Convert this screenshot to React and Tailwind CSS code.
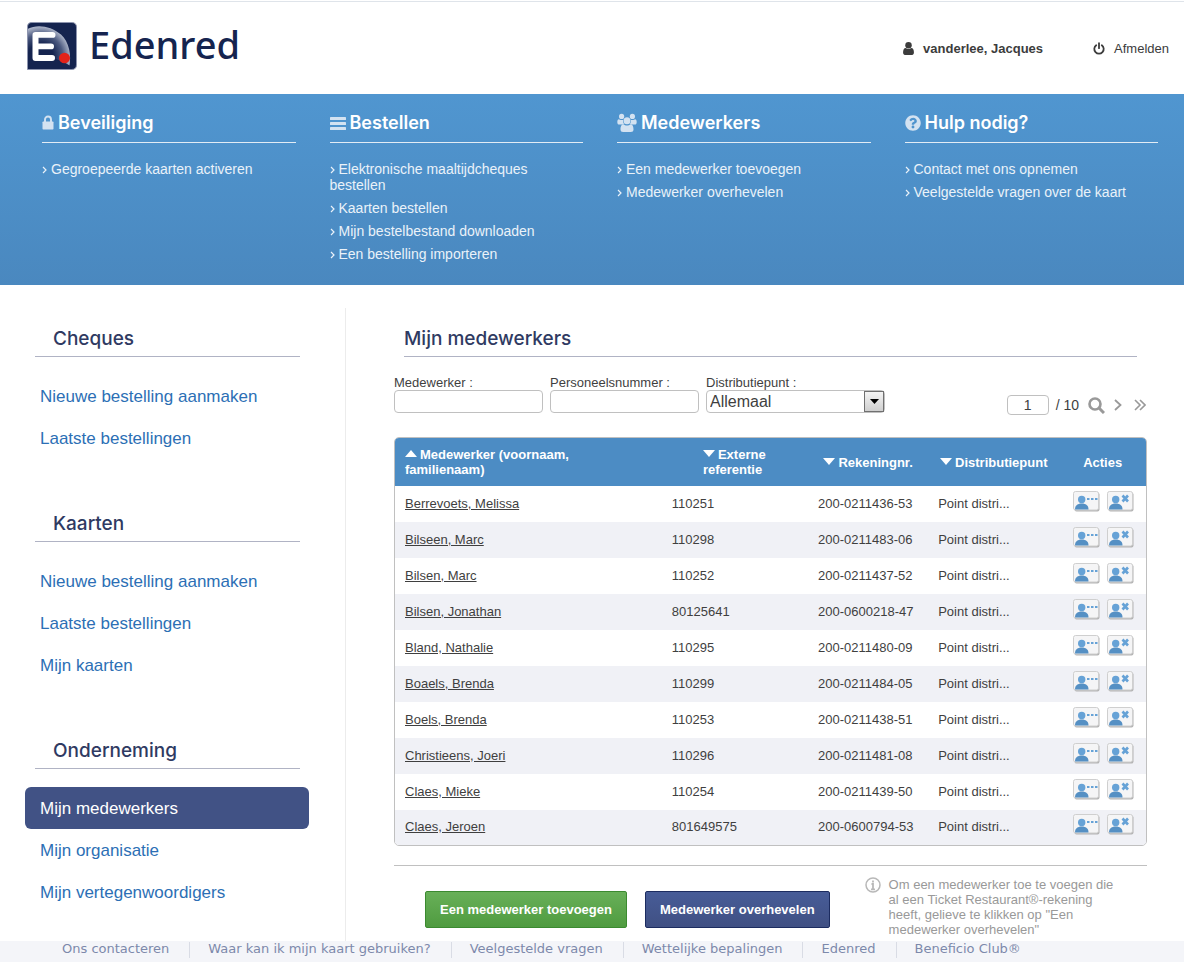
import { FaQuestionCircle } from 'react-icons/fa'

const NAV = [
  {
    title: 'Beveiliging',
    icon: <LockIcon />,
    links: ['Gegroepeerde kaarten activeren'],
  },
  {
    title: 'Bestellen',
    icon: <BarsIcon />,
    links: [
      'Elektronische maaltijdcheques bestellen',
      'Kaarten bestellen',
      'Mijn bestelbestand downloaden',
      'Een bestelling importeren',
    ],
  },
  {
    title: 'Medewerkers',
    icon: <GroupIcon />,
    links: ['Een medewerker toevoegen', 'Medewerker overhevelen'],
  },
  {
    title: 'Hulp nodig?',
    icon: <FaQuestionCircle className="h-4 w-4" />,
    links: ['Contact met ons opnemen', 'Veelgestelde vragen over de kaart'],
  },
]

const SECTIONS = [
  { title: 'Cheques', items: ['Nieuwe bestelling aanmaken', 'Laatste bestellingen'] },
  { title: 'Kaarten', items: ['Nieuwe bestelling aanmaken', 'Laatste bestellingen', 'Mijn kaarten'] },
  { title: 'Onderneming', items: ['Mijn medewerkers', 'Mijn organisatie', 'Mijn vertegenwoordigers'] },
]

const ACTIVE = 'Mijn medewerkers'

const ROWS = [
  ['Berrevoets, Melissa', '110251', '200-0211436-53'],
  ['Bilseen, Marc', '110298', '200-0211483-06'],
  ['Bilsen, Marc', '110252', '200-0211437-52'],
  ['Bilsen, Jonathan', '80125641', '200-0600218-47'],
  ['Bland, Nathalie', '110295', '200-0211480-09'],
  ['Boaels, Brenda', '110299', '200-0211484-05'],
  ['Boels, Brenda', '110253', '200-0211438-51'],
  ['Christieens, Joeri', '110296', '200-0211481-08'],
  ['Claes, Mieke', '110254', '200-0211439-50'],
  ['Claes, Jeroen', '801649575', '200-0600794-53'],
]

const FOOTER = [
  'Ons contacteren',
  'Waar kan ik mijn kaart gebruiken?',
  'Veelgestelde vragen',
  'Wettelijke bepalingen',
  'Edenred',
  'Beneficio Club®',
]

function LockIcon() {
  return (
    <svg viewBox="0 0 12 15" className="h-[15px] w-3">
      <path d="M3 7V4.500a3 3 0 0 1 6 0V7" fill="none" stroke="currentColor" strokeWidth="1.900" />
      <rect x="0.500" y="6.500" width="11" height="8" rx="0.8" fill="currentColor" />
    </svg>
  )
}

function BarsIcon() {
  return (
    <svg viewBox="0 0 16 14" className="h-[14px] w-4" fill="currentColor">
      <rect y="1" width="16" height="3" rx="0.6" />
      <rect y="6" width="16" height="3" rx="0.6" />
      <rect y="11" width="16" height="3" rx="0.6" />
    </svg>
  )
}

function GroupIcon() {
  return (
    <svg viewBox="0 0 20 20" className="h-5 w-5" fill="currentColor">
      <circle cx="4.6" cy="3.4" r="2.6" />
      <circle cx="15.4" cy="3.4" r="2.6" />
      <path d="M5.2 11.6H2.4C.8 11.6.3 10.6.3 9c0-1.7.6-2.8 1.5-2.8.7 0 1.5.9 2.9.9.5 0 .9-.1 1.3-.2-.1 1.8.3 3 1.1 4-.7.1-1.3.3-1.9.7z" />
      <path d="M14.8 11.6h2.8c1.6 0 2.1-1 2.1-2.6 0-1.7-.6-2.8-1.5-2.8-.7 0-1.5.9-2.9.9-.5 0-.9-.1-1.3-.2.1 1.8-.3 3-1.1 4 .7.1 1.3.3 1.9.7z" />
      <circle cx="10" cy="7.7" r="3.5" />
      <path d="M6.500 11.300c.9.800 2.100 1.300 3.500 1.300s2.600-.5 3.500-1.300c2.300 0 3 2.600 3 5.200 0 1.700-1 2.500-2.600 2.500H6.100c-1.600 0-2.600-.8-2.600-2.500 0-2.600.7-5.200 3-5.200z" />
    </svg>
  )
}

function UserIcon() {
  return (
    <svg viewBox="0 128 1280 1536" className="h-[13px] w-[11px]" fill="currentColor">
      <path d="M1280 1399q0 109-62.500 187t-150.500 78h-854q-88 0-150.500-78t-62.500-187q0-85 8.500-160.500t31.500-152 58.500-131 94-89 134.500-34.500q131 128 313 128t313-128q76 0 134.500 34.500t94 89 58.500 131 31.500 152 8.500 160.500z" />
      <circle cx="640" cy="512" r="384" />
    </svg>
  )
}

function PowerIcon() {
  return (
    <svg viewBox="0 0 12 13" className="h-[13px] w-3" fill="none" stroke="currentColor" strokeLinecap="round">
      <path d="M3.200 3.200a4.700 4.700 0 1 0 5.600 0" strokeWidth="1.800" />
      <path d="M6 1.200v5" strokeWidth="1.800" />
    </svg>
  )
}

function Logo() {
  return (
    <a href="#" className="flex items-center gap-3 pb-1 text-[#15244f]">
      <svg viewBox="0 0 50 50" preserveAspectRatio="none" className="h-12 w-[50px]">
        <defs>
          <radialGradient id="glow" cx="0.3" cy="0.72" r="0.75">
            <stop offset="0.4" stopColor="#15244f" />
            <stop offset="0.7" stopColor="#4c5a80" />
            <stop offset="0.98" stopColor="#b9c0d2" />
          </radialGradient>
          <clipPath id="tile">
            <path d="M5 1h39q5 0 5 5v38q0 5-5 5H1V5q0-4 4-4z" />
          </clipPath>
        </defs>
        <path d="M5 .5h39.500q5 0 5 5v39q0 5-5 5H.5V5q0-4.500 4.500-4.500z" fill="#15244f" stroke="#8d95ae" />
        <g clipPath="url(#tile)">
          <path d="M1 7C10 2 24 4 34 13c8 8 11 21 8 35-9-3-20-8-41-12z" fill="url(#glow)" />
          <path d="M1 32c14 3 28 4 43 14v4H1z" fill="#15244f" />
        </g>
        <path d="M25.500 13.500H8.500v24h16.500M8.500 25.500h15.500" fill="none" stroke="#fff" strokeWidth="6" strokeLinecap="round" strokeLinejoin="round" />
        <circle cx="37.500" cy="37.500" r="5.500" fill="#e2231a" />
      </svg>
      <span className="pb-1 font-['Noto_Sans'] text-[38px] leading-[46px] font-medium">Edenred</span>
    </a>
  )
}

function PersonIcon({ children }) {
  return (
    <svg viewBox="0 0 27 21" className="h-[21px] w-[27px]">
      <rect x="1.500" y="1.500" width="25" height="19" rx="2" fill="#b4b4b4" />
      <rect x="0.500" y="0.500" width="25" height="18.500" rx="2" fill="#f5f5f6" stroke="#cfcfcf" />
      <path d="M2 18.500c0-4 2-5 5-6h3.500c3 1 5 2 5 6z" fill="#5590c4" />
      <circle cx="8.700" cy="8.500" r="3.700" fill="#66a2d6" />
      {children}
    </svg>
  )
}

function SortArrow({ up }) {
  return (
    <svg viewBox="0 0 12 7" className="mr-[3px] inline-block h-[7px] w-3 align-[2px]" fill="#fff">
      <path d={up ? 'M0 7 6 0 12 7z' : 'M0 0h12L6 7z'} />
    </svg>
  )
}

function TopBar() {
  return (
    <header className="mt-px flex h-[93px] items-center justify-between border-t border-[#dfe4ea] pr-[15px] pl-[27px]">
      <Logo />
      <div className="flex items-center gap-[50px] pt-px text-[13px] leading-4 text-[#3c3c3c]">
        <a href="#" className="flex items-center gap-[9px] font-bold">
          <UserIcon />
          vanderlee, Jacques
        </a>
        <a href="#" className="flex items-center gap-[9px]">
          <PowerIcon />
          Afmelden
        </a>
      </div>
    </header>
  )
}

function MainNav() {
  return (
    <nav className="grid min-h-[191px] grid-cols-4 gap-[34px] bg-linear-to-b from-[#5096d0] to-[#4a88bf] pr-[26px] pl-[42px]">
      {NAV.map((group) => (
        <section key={group.title}>
          <h2 className="flex h-[49px] items-center gap-1 border-b border-[#e2ecf5] pt-[9px] font-[Inter] text-[18px] leading-6 font-semibold text-white">
            <span className="text-[#d3e2f1]">{group.icon}</span>
            {group.title}
          </h2>
          <ul className="mt-[18px] flex flex-col gap-[7px] text-[14px] leading-4 text-[#eaf2f9]">
            {group.links.map((link) => (
              <li key={link}>
                <a href="#">
                  <svg viewBox="0 0 5 8" className="mr-1 inline-block h-2 w-[5px]" fill="none" stroke="currentColor">
                    <path d="M1 1l3 3-3 3" strokeWidth="1.200" />
                  </svg>
                  {link}
                </a>
              </li>
            ))}
          </ul>
        </section>
      ))}
    </nav>
  )
}

function Sidebar() {
  return (
    <aside className="mt-[23px] flex w-[346px] shrink-0 flex-col gap-[34px] border-r border-[#ececec] pr-[36px] pl-[25px]">
      {SECTIONS.map((section) => (
        <section key={section.title}>
          <h2 className="mr-[9px] ml-[10px] flex h-[49px] items-center border-b border-[#b0b3c4] pt-[14px] pl-[18px] font-[Inter] text-[19px] leading-6 font-medium text-[#2f3a62]">
            {section.title}
          </h2>
          <ul className="mt-[18px]">
            {section.items.map((item) => (
              <li key={item}>
                <a
                  href="#"
                  className={`flex h-[42px] items-center rounded-md pt-px pl-[15px] text-[17px] ${
                    item === ACTIVE ? 'bg-[#415285] text-white' : 'text-[#2c6fb5]'
                  }`}
                >
                  {item}
                </a>
              </li>
            ))}
          </ul>
        </section>
      ))}
    </aside>
  )
}

function Filters() {
  return (
    <form className="mt-[18px] flex items-start justify-between">
      <div className="flex gap-[7px] text-[13px] leading-[15px]">
        <label className="flex flex-col">
          Medewerker :
          <input type="text" className="h-[23px] w-[149px] rounded-[4px] border border-[#c0c0c0] px-1" />
        </label>
        <label className="flex flex-col">
          Personeelsnummer :
          <input type="text" className="h-[23px] w-[149px] rounded-[4px] border border-[#c0c0c0] px-1" />
        </label>
        <label className="flex flex-col">
          Distributiepunt :
          <span className="relative">
            <select className="h-[23px] w-[179px] appearance-none rounded-[4px] border border-[#c0c0c0] bg-white pl-[3px] text-[16px] leading-5">
              <option>Allemaal</option>
            </select>
            <span className="pointer-events-none absolute top-px right-px flex h-[21px] w-5 items-center justify-center border border-[#707070] bg-linear-to-b from-[#f4f4f4] to-[#cfcfcf]">
              <svg viewBox="0 0 9 5" className="h-[5px] w-[9px]">
                <path d="M0 0h9L4.500 5z" fill="#000" />
              </svg>
            </span>
          </span>
        </label>
      </div>
      <div className="mt-5 flex items-center pr-px text-[14px] text-[#3f3f3f]">
        <input
          type="text"
          aria-label="Pagina"
          defaultValue="1"
          className="h-5 w-[42px] rounded-[4px] border border-[#c0c0c0] text-center"
        />
        <span className="ml-[7px] leading-5">/ 10</span>
        <button type="button" aria-label="Zoeken" className="ml-[9px] text-[#999]">
          <svg viewBox="0 0 17 17" className="h-[17px] w-[17px]" fill="none" stroke="currentColor" strokeWidth="2.600">
            <circle cx="7" cy="7" r="5.500" />
            <path d="M11 11l5 5" strokeWidth="3" />
          </svg>
        </button>
        <button type="button" aria-label="Volgende" className="ml-[9px] text-[#999]">
          <svg viewBox="0 0 8 12" className="h-3 w-2" fill="none" stroke="currentColor" strokeWidth="1.800">
            <path d="M1 1l5.500 5L1 11" />
          </svg>
        </button>
        <button type="button" aria-label="Laatste" className="ml-3 text-[#999]">
          <svg viewBox="0 0 12 12" className="h-3 w-3" fill="none" stroke="currentColor" strokeWidth="1.600">
            <path d="M1 1l5 5-5 5M6 1l5 5-5 5" />
          </svg>
        </button>
      </div>
    </form>
  )
}

function EmployeeTable() {
  return (
    <div className="mt-[22px] overflow-hidden rounded-[5px] border border-[#c0c0c0]">
      <table className="w-full table-fixed text-left text-[13px] leading-[15px]">
        <colgroup>
          <col className="w-[35%]" />
          <col className="w-[20%]" />
          <col className="w-[16%]" />
          <col className="w-[18%]" />
          <col className="w-[11%]" />
        </colgroup>
        <thead className="bg-[#4c8cc4] text-white">
          <tr className="h-12">
            <th className="px-[10px]">
              <span className="inline-block w-[180px]">
                <SortArrow up />
                Medewerker (voornaam, familienaam)
              </span>
            </th>
            <th className="pl-1 text-center">
              <span className="inline-block w-16 text-left">
                <SortArrow />
                Externe referentie
              </span>
            </th>
            <th className="text-center">
              <SortArrow />
              Rekeningnr.
            </th>
            <th className="pr-1 text-center">
              <SortArrow />
              Distributiepunt
            </th>
            <th className="pr-1 text-center">Acties</th>
          </tr>
        </thead>
        <tbody>
          {ROWS.map(([name, reference, account]) => (
            <tr key={name} className="h-9 last:h-[35px] even:bg-[#f0f1f6]">
              <td className="px-[10px] pb-[2px]">
                <a href="#" className="underline">
                  {name}
                </a>
              </td>
              <td className="px-[14px] pb-[2px]">{reference}</td>
              <td className="px-[10px] pb-[2px]">{account}</td>
              <td className="px-[10px] pb-[2px]">Point distri...</td>
              <td className="pl-[10px]">
                <div className="flex gap-[7px] pb-[6px]">
                  <button type="button" aria-label={`Details ${name}`}>
                    <PersonIcon>
                      <path d="M14 8h2.500M18 8h2.500M22 8h2.500" stroke="#66a2d6" strokeWidth="2" />
                    </PersonIcon>
                  </button>
                  <button type="button" aria-label={`Verwijder ${name}`}>
                    <PersonIcon>
                      <path d="M15.500 4.500l5.500 6M21 4.500l-5.500 6" stroke="#66a2d6" strokeWidth="2.600" />
                    </PersonIcon>
                  </button>
                </div>
              </td>
            </tr>
          ))}
        </tbody>
      </table>
    </div>
  )
}

function Actions() {
  return (
    <div className="mt-[19px] flex items-start border-t border-[#c0c0c0] pl-[31px] text-[13px] font-bold text-white">
      <button
        type="button"
        className="mt-[25px] h-[37px] rounded-[2px] border border-[#3b8a30] bg-linear-to-b from-[#68b058] to-[#4f9b40] px-[14px]"
      >
        Een medewerker toevoegen
      </button>
      <button
        type="button"
        className="mt-[25px] ml-[18px] h-[37px] rounded-[2px] border border-[#1c2c60] bg-linear-to-b from-[#475c98] to-[#405083] px-[14px]"
      >
        Medewerker overhevelen
      </button>
      <div className="mt-[11px] ml-[35px] flex w-[260px] gap-2 font-normal text-[#999]">
        <svg viewBox="0 0 16 16" className="h-4 w-4 shrink-0" fill="none" stroke="#b8b8b8">
          <circle cx="8" cy="8" r="7" strokeWidth="1.500" />
          <path d="M8 3.500v2M6.500 7H8v5M6 12.300h4" strokeWidth="1.800" />
        </svg>
        <p className="leading-[15px]">
          Om een medewerker toe te voegen die al een Ticket Restaurant®-rekening heeft, gelieve te klikken op "Een
          medewerker overhevelen"
        </p>
      </div>
    </div>
  )
}

export default function App() {
  return (
    <div className="bg-white font-['Liberation_Sans',Arial,sans-serif] text-[#3f3f3f]">
      <TopBar />
      <MainNav />
      <div className="flex min-h-[656px]">
        <Sidebar />
        <main className="min-w-0 flex-1 pr-[37px] pl-12">
          <h1 className="mx-[10px] mt-[23px] flex h-[49px] items-center border-b border-[#b0b3c4] pt-[14px] font-[Inter] text-[19px] leading-6 font-medium text-[#2f3a62]">
            Mijn medewerkers
          </h1>
          <Filters />
          <EmployeeTable />
          <Actions />
        </main>
      </div>
      <footer className="bg-[#f4f5f9] pl-[62px]">
        <ul className="flex h-[21px] pt-px font-['DejaVu_Sans'] text-[13px] leading-[14px] whitespace-nowrap text-[#7d89ab]">
          {FOOTER.map((label) => (
            <li key={label} className="mr-5 h-4 border-l border-[#d9dce5] pl-[18px] first:border-l-0 first:pl-0">
              <a href="#">{label}</a>
            </li>
          ))}
        </ul>
      </footer>
    </div>
  )
}
